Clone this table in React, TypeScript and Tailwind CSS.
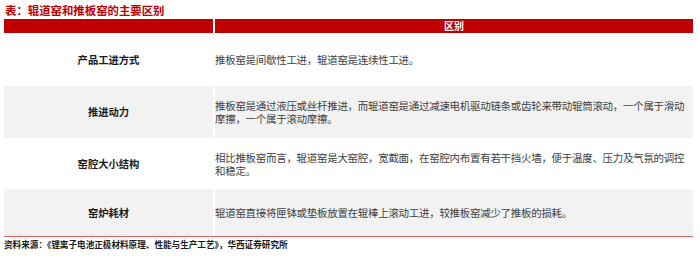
const rows = [
  {
    label: "产品工进方式",
    lines: ["推板窑是间歇性工进，辊道窑是连续性工进。"],
    h: "h-[53px]",
    bg: "bg-white",
  },
  {
    label: "推进动力",
    lines: [
      "推板窑是通过液压或丝杆推进，而辊道窑是通过减速电机驱动链条或齿轮来带动辊筒滚动，一个属于滑动",
      "摩擦，一个属于滚动摩擦。",
    ],
    h: "h-[52px]",
    bg: "bg-[#f2f2f2]",
  },
  {
    label: "窑腔大小结构",
    lines: [
      "相比推板窑而言，辊道窑是大窑腔，宽截面，在窑腔内布置有若干挡火墙，便于温度、压力及气氛的调控",
      "和稳定。",
    ],
    h: "h-[51px]",
    bg: "bg-white",
  },
  {
    label: "窑炉耗材",
    lines: ["辊道窑直接将匣钵或垫板放置在辊棒上滚动工进，较推板窑减少了推板的损耗。"],
    h: "h-[47px]",
    bg: "bg-[#f2f2f2]",
  },
];

export default function App() {
  return (
    <main
      className="w-[700px] h-[260px] bg-white overflow-hidden"
      style={{ fontFamily: '"Noto Sans CJK SC", "Noto Sans", sans-serif' }}
    >
      <h1 className="pl-[5px] pt-[3px] h-[19px] text-[11.4px] leading-[14px] font-bold text-[#c00000]">
        表：辊道窑和推板窑的主要区别
      </h1>

      <div className="ml-[4px] w-[689px]">
        <div className="grid grid-cols-[209px_478px] gap-x-[2px] h-[14px]">
          <div className="bg-[#c00000]" />
          <div className="bg-[#c00000] flex items-center justify-center text-white font-bold text-[10px] leading-none">
            区别
          </div>
        </div>

        {rows.map((row) => (
          <div
            key={row.label}
            className={`grid grid-cols-[209px_478px] gap-x-[2px] ${row.h}`}
          >
            <div
              className={`${row.bg} flex items-center justify-center text-[10.3px] font-bold text-[#1a1a1a]`}
            >
              {row.label}
            </div>
            <div
              className={`${row.bg} flex flex-col justify-center text-[10.5px] leading-[13px] tracking-[-0.3px] text-[#404040]`}
            >
              {row.lines.map((line) => (
                <p key={line} className="whitespace-nowrap">
                  {line}
                </p>
              ))}
            </div>
          </div>
        ))}

        <div className="h-px bg-[#e06666]" />
      </div>

      <p className="pl-[4px] pt-[1px] text-[8.6px] leading-[12px] font-bold text-[#1a1a1a]">
        资料来源：《锂离子电池正极材料原理、性能与生产工艺》，华西证券研究所
      </p>
    </main>
  );
}
